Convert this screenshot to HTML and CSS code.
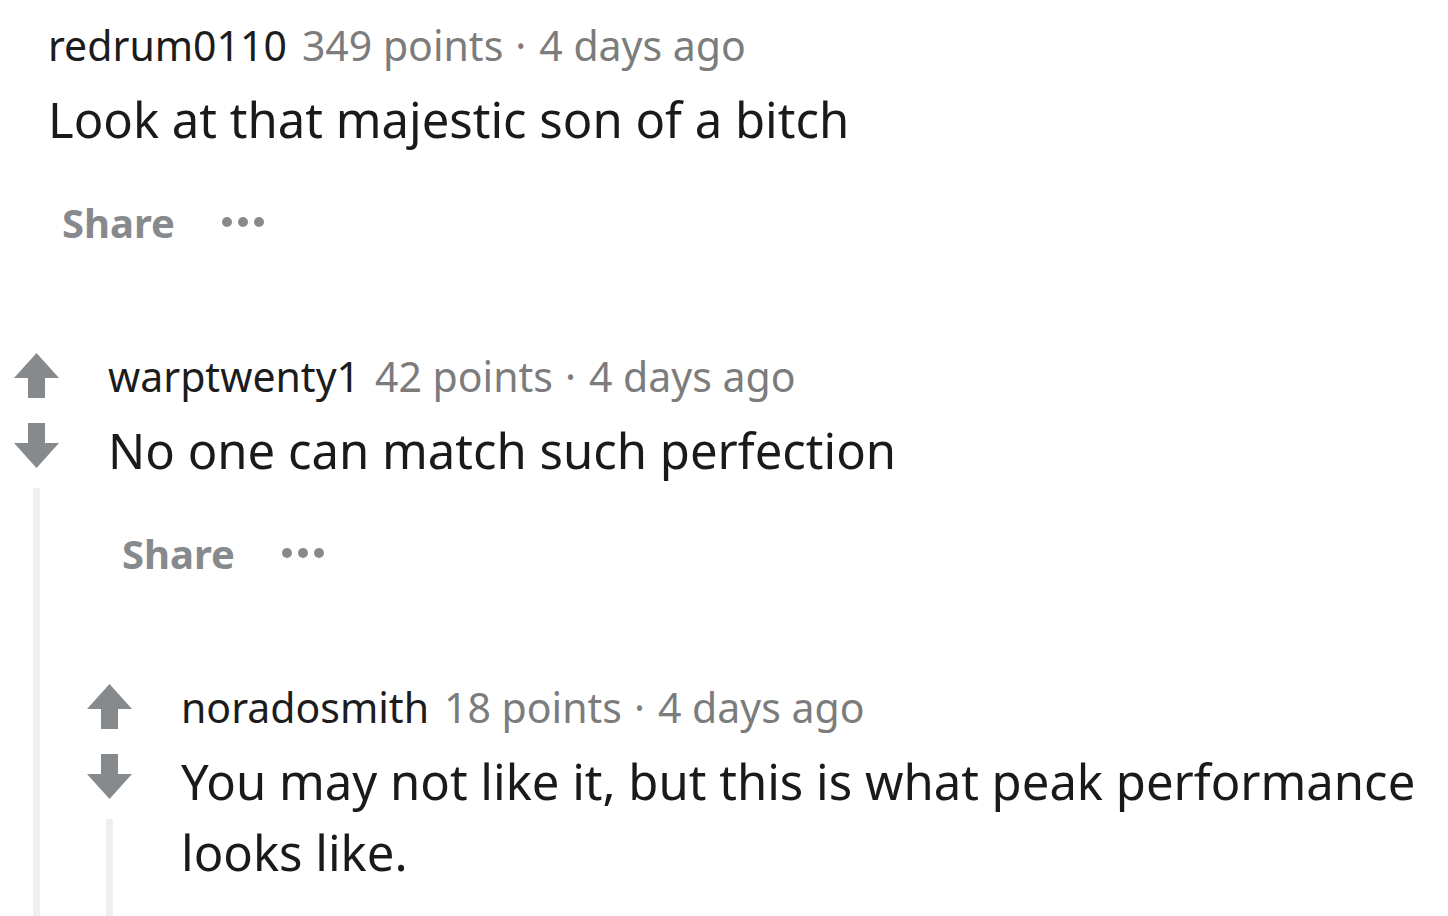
FILE: index.html
```html
<!DOCTYPE html>
<html>
<head>
<meta charset="utf-8">
<link rel="stylesheet" href="styles.css">
</head>
<body>
<div class="page">
  <div class="root-comment">
    <div class="meta"><span class="author">redrum0110</span><span class="score">349 points<span class="sep">·</span>4 days ago</span></div>
    <div class="body">Look at that majestic son of a bitch</div>
    <div class="actions"><span class="share">Share</span><span class="dots"><i></i><i></i><i></i></span></div>
  </div>

  <div class="comment level1">
    <div class="vote">
      <svg class="arrow" viewBox="0 0 45 45"><path d="M22.5 0 L45 25 L31 25 L31 45 L14 45 L14 25 L0 25 Z"/></svg>
      <svg class="arrow down" viewBox="0 0 45 45"><path d="M14 0 L31 0 L31 20 L45 20 L22.5 45 L0 20 L14 20 Z"/></svg>
      <div class="thread"></div>
    </div>
    <div class="main">
      <div class="content">
        <div class="meta"><span class="author">warptwenty1</span><span class="score">42 points<span class="sep">·</span>4 days ago</span></div>
        <div class="body">No one can match such perfection</div>
        <div class="actions"><span class="share">Share</span><span class="dots"><i></i><i></i><i></i></span></div>
      </div>
      <div class="comment level2">
        <div class="vote">
          <svg class="arrow" viewBox="0 0 45 45"><path d="M22.5 0 L45 25 L31 25 L31 45 L14 45 L14 25 L0 25 Z"/></svg>
          <svg class="arrow down" viewBox="0 0 45 45"><path d="M14 0 L31 0 L31 20 L45 20 L22.5 45 L0 20 L14 20 Z"/></svg>
          <div class="thread"></div>
        </div>
        <div class="main">
          <div class="content">
            <div class="meta"><span class="author">noradosmith</span><span class="score">18 points<span class="sep">·</span>4 days ago</span></div>
            <div class="body">You may not like it, but this is what peak performance looks like.</div>
          </div>
        </div>
      </div>
    </div>
  </div>
</div>
</body>
</html>
```

FILE: styles.css
```css
* { box-sizing: border-box; }
html, body {
  margin: 0;
  padding: 0;
  background: #ffffff;
  height: 100%;
  overflow: hidden;
}
.page {
  padding-top: 18px;
  font-family: "Noto Sans", "Open Sans", sans-serif;
  color: #1c1c1c;
  min-height: 916px;
  display: flex;
  flex-direction: column;
}
.meta {
  font-size: 41px;
  line-height: 54px;
  white-space: nowrap;
}
.author { color: #1c1c1c; }
.score {
  color: #7c7c7c;
  margin-left: 15px;
}
.sep {
  margin: 0 13px 0 12px;
}
.body {
  margin-top: 12px;
  font-size: 49px;
  line-height: 71px;
  color: #1a1a1b;
}
.actions {
  margin-top: 40px;
  height: 54px;
  display: flex;
  align-items: center;
  padding-left: 14px;
}
.share {
  font-size: 40px;
  font-weight: 700;
  color: #878a8c;
}
.dots {
  display: flex;
  gap: 6px;
  margin-left: 47px;
}
.dots i {
  width: 10px;
  height: 10px;
  border-radius: 50%;
  background: #878a8c;
}
.root-comment {
  padding-left: 48px;
  margin-bottom: 100px;
}
.comment {
  display: grid;
  grid-template-columns: 73px 1fr;
  flex: 1;
}
.vote {
  display: flex;
  flex-direction: column;
  align-items: center;
  padding-top: 4px;
}
.arrow {
  width: 45px;
  height: 45px;
  fill: #878a8c;
  display: block;
}
.arrow.down { margin-top: 25px; }
.thread {
  flex: 1;
  width: 7px;
  margin-top: 20px;
  background: #edeff1;
}
.main {
  display: flex;
  flex-direction: column;
}
.content {
  padding-left: 35px;
}
.level1 > .main > .content { margin-bottom: 100px; }
```
